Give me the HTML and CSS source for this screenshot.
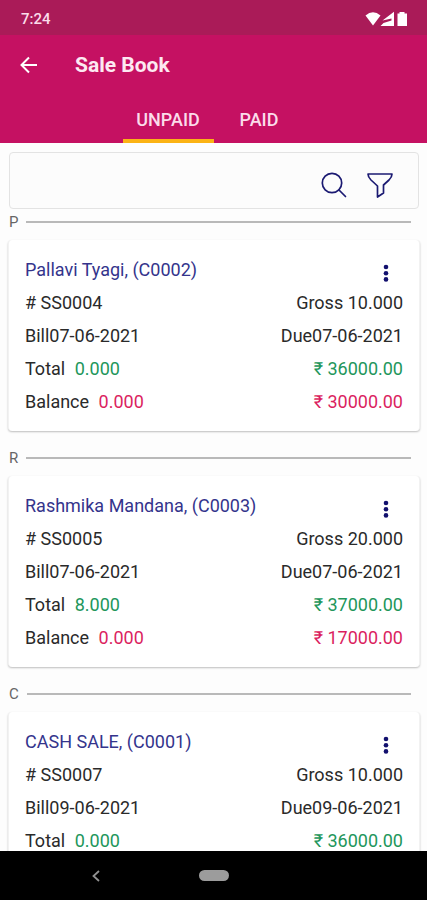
FILE: index.html
```html
<!DOCTYPE html>
<html lang="en">
<head>
<meta charset="utf-8">
<meta name="viewport" content="width=device-width, initial-scale=1">
<title>Sale Book</title>
<link rel="stylesheet" href="styles.css">
</head>
<body>
<div class="status">
  <span>7:24</span>
  <svg class="status-icons" width="44" height="16" viewBox="0 0 44 16" fill="#fff" aria-hidden="true">
    <path d="M0.500 4.500Q8-2 15.500 4.500L8 14.500Z"/>
    <path d="M29 0.800V15H15.500L18.500 12L26.500 9.500V7.500L17.500 9.500Z"/>
    <path d="M34.500 1H39.500V2.500H42V15H32.500V2.500H34.500Z"/>
  </svg>
</div>
<header class="header">
  <div class="titlebar">
    <button class="icon-btn" type="button" aria-label="Back">
      <svg width="18" height="18" viewBox="0 0 18 18" fill="none" stroke="#fff" stroke-width="2"><path d="M17 9H2M9 1.500L1.500 9L9 16.500"/></svg>
    </button>
    <h1 class="title">Sale Book</h1>
  </div>
  <nav class="tabs">
    <button class="tab active" type="button">UNPAID</button>
    <button class="tab" type="button">PAID</button>
  </nav>
</header>
<main class="content">
  <div class="search">
    <input class="search-input" type="text" aria-label="Search sales">
    <button class="icon-btn" type="button" aria-label="Search">
      <svg width="26" height="26" viewBox="0 0 26 26" fill="none" stroke="#1b1a72" stroke-width="1.700" stroke-linecap="round"><circle cx="11" cy="11" r="9.700"/><path d="M18 18L24.500 24.500"/></svg>
    </button>
    <button class="icon-btn" type="button" aria-label="Filter">
      <svg width="26" height="26" viewBox="0 0 26 26" fill="none" stroke="#1b1a72" stroke-width="1.700" stroke-linejoin="round"><path d="M1 2H25Q25 5 22 8L16.500 13V21L10.500 25V14L4 8Q1 5 1 2Z"/></svg>
    </button>
  </div>

  <h2 class="section">P</h2>
  <article class="card">
    <div class="row"><a class="name" href="#">Pallavi Tyagi, (C0002)</a>
      <button class="icon-btn more" type="button" aria-label="More options"><svg width="6" height="18" viewBox="0 0 6 18" fill="#12106e"><circle cx="3" cy="3" r="2.300"/><circle cx="3" cy="9.200" r="2.300"/><circle cx="3" cy="15.400" r="2.300"/></svg></button></div>
    <div class="row"><span># SS0004</span><span>Gross 10.000</span></div>
    <div class="row"><span>Bill07-06-2021</span><span>Due07-06-2021</span></div>
    <div class="row"><span>Total <b class="total">0.000</b></span><span class="total">₹ 36000.00</span></div>
    <div class="row"><span>Balance <b class="balance">0.000</b></span><span class="balance">₹ 30000.00</span></div>
  </article>

  <h2 class="section">R</h2>
  <article class="card">
    <div class="row"><a class="name" href="#">Rashmika Mandana, (C0003)</a>
      <button class="icon-btn more" type="button" aria-label="More options"><svg width="6" height="18" viewBox="0 0 6 18" fill="#12106e"><circle cx="3" cy="3" r="2.300"/><circle cx="3" cy="9.200" r="2.300"/><circle cx="3" cy="15.400" r="2.300"/></svg></button></div>
    <div class="row"><span># SS0005</span><span>Gross 20.000</span></div>
    <div class="row"><span>Bill07-06-2021</span><span>Due07-06-2021</span></div>
    <div class="row"><span>Total <b class="total">8.000</b></span><span class="total">₹ 37000.00</span></div>
    <div class="row"><span>Balance <b class="balance">0.000</b></span><span class="balance">₹ 17000.00</span></div>
  </article>

  <h2 class="section">C</h2>
  <article class="card">
    <div class="row"><a class="name" href="#">CASH SALE, (C0001)</a>
      <button class="icon-btn more" type="button" aria-label="More options"><svg width="6" height="18" viewBox="0 0 6 18" fill="#12106e"><circle cx="3" cy="3" r="2.300"/><circle cx="3" cy="9.200" r="2.300"/><circle cx="3" cy="15.400" r="2.300"/></svg></button></div>
    <div class="row"><span># SS0007</span><span>Gross 10.000</span></div>
    <div class="row"><span>Bill09-06-2021</span><span>Due09-06-2021</span></div>
    <div class="row"><span>Total <b class="total">0.000</b></span><span class="total">₹ 36000.00</span></div>
  </article>
</main>
<footer class="navbar">
  <button class="icon-btn back" type="button" aria-label="System back"><svg width="8" height="12" viewBox="0 0 8 12" fill="none" stroke="#929292" stroke-width="1.800"><path d="M7 1L1.500 6L7 11"/></svg></button>
  <button class="home" type="button" aria-label="Home"></button>
</footer>
</body>
</html>
```

FILE: styles.css
```css
* {
  box-sizing: border-box;
}

body {
  display: flex;
  flex-direction: column;
  height: 100vh;
  margin: 0;
  overflow: hidden;
  background: #fdfdfd;
  color: #2a2a2a;
  font-family: Roboto, sans-serif;
  font-size: 18px;
}

button {
  font: inherit;
  border: 0;
  padding: 0;
  background: none;
}

.icon-btn {
  display: flex;
}

.status {
  display: flex;
  flex: none;
  align-items: center;
  justify-content: space-between;
  height: 35px;
  padding: 2px 18px 0 21px;
  background: #aa1b58;
  color: #fbdcea;
  font-size: 15px;
  font-weight: 500;
}

.header {
  flex: none;
  background: #c51162;
  color: #fff;
}

.titlebar {
  display: flex;
  align-items: center;
  gap: 37px;
  height: 60px;
  padding: 0 20px;
}

.title {
  margin: 0;
  color: #fde9f2;
  font-size: 21px;
  font-weight: 700;
}

.tabs {
  display: flex;
  justify-content: center;
}

.tab {
  width: 91px;
  height: 48px;
  padding-top: 4px;
  border-bottom: 4px solid transparent;
  color: #fbdcea;
  font-weight: 500;
}

.tab.active {
  border-color: #fbb315;
}

.content {
  flex: 1;
  min-height: 0;
  overflow: hidden;
  padding: 9px 7px 0 8px;
}

.search {
  display: flex;
  align-items: center;
  gap: 20px;
  height: 57px;
  margin: 0 1px;
  padding: 9px 25px 0 16px;
  border: 1px solid #e3e3e3;
  border-radius: 4px;
  background: #fcfcfc;
}

.search-input {
  flex: 1;
  min-width: 0;
  border: 0;
  outline: 0;
  background: none;
  font: inherit;
}

.section {
  display: flex;
  align-items: center;
  gap: 8px;
  height: 26px;
  margin: 14px 9px 5px 1px;
  color: #666;
  font-size: 15px;
  font-weight: 400;
}

.search + .section {
  margin-top: 0;
}

.section::after {
  content: "";
  flex: 1;
  height: 2px;
  background: #b9b9b9;
}

.card {
  padding: 13px 16px;
  border: 1px solid #f2f2f2;
  border-width: 0 1px;
  border-radius: 4px;
  background: #fff;
  box-shadow: 0 1px 2px rgba(0, 0, 0, 0.25);
}

.row {
  display: flex;
  align-items: center;
  justify-content: space-between;
  height: 33px;
}

.name {
  color: #34348c;
  text-decoration: none;
}

.more {
  padding: 6px 14px 0 0;
}

.row b {
  margin-left: 5px;
  font-weight: 400;
}

.total {
  color: #22965b;
}

.balance {
  color: #db1f5f;
}

.navbar {
  display: grid;
  grid-template-columns: 1fr 30px 1fr;
  align-items: center;
  justify-items: center;
  flex: none;
  height: 49px;
  background: #000;
}

.back {
  padding-right: 6px;
}

.home {
  width: 30px;
  height: 11px;
  border-radius: 6px;
  background: #9c9c9c;
}
```
